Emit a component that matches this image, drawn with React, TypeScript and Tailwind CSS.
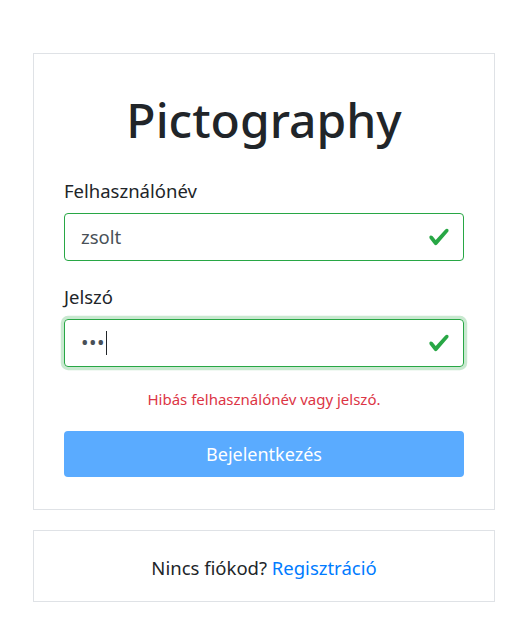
export default function App() {
  const check = (
    <svg viewBox="0 0 8 8" className="w-[22px] h-[22px] shrink-0" aria-hidden>
      <path fill="#28a745" d="M2.3 6.73L.6 4.53c-.4-1.04.46-1.4 1.1-.8l1.1 1.4 3.4-3.8c.6-.63 1.6-.27 1.2.7l-4 4.6c-.43.5-.8.4-1.1.1z" />
    </svg>
  );

  return (
    <div className="min-h-[617px] bg-white font-['Noto_Sans',sans-serif] text-[#212529]">
      <div className="ml-[33px] w-[462px] pt-[53px]">
        <div className="border border-[#dfe2e6] bg-white px-[30px] pt-[32px] pb-[32px]">
          <h1 className="text-center text-[48px] font-medium leading-[67px]">Pictography</h1>

          <label className="mt-[24px] block text-[18.5px] leading-[28px]">Felhasználónév</label>
          <div className="mt-[8px] flex h-[48px] items-center rounded-[4px] border border-[#28a745] pl-[16px] pr-[13px]">
            <span className="flex-1 text-[18.5px] text-[#495057]">zsolt</span>
            {check}
          </div>

          <label className="mt-[22px] block text-[18.5px] leading-[28px]">Jelszó</label>
          <div className="mt-[8px] flex h-[48px] items-center rounded-[4px] border border-[#28a745] pl-[16px] pr-[13px] shadow-[0_0_0_3.2px_rgba(40,167,69,0.25)]">
            <span className="flex flex-1 items-center text-[#495057]">
              <span className="text-[20px] tracking-[0.5px]">•••</span>
              <span className="ml-[1px] inline-block h-[24px] w-px bg-[#212529]"></span>
            </span>
            {check}
          </div>

          <p className="mt-[20px] text-center text-[15px] leading-[24px] text-[#dc3545]">
            Hibás felhasználónév vagy jelszó.
          </p>

          <button className="mt-[20px] flex h-[46px] w-full items-center justify-center rounded-[4px] bg-[#5aabff] text-[18px] text-white">
            Bejelentkezés
          </button>
        </div>

        <div className="mt-[20px] flex h-[72px] items-center justify-center border border-[#dfe2e6] pt-[3px] text-[18.5px]">
          <span>
            Nincs fiókod? <a className="text-[#007bff]">Regisztráció</a>
          </span>
        </div>
      </div>
    </div>
  );
}
